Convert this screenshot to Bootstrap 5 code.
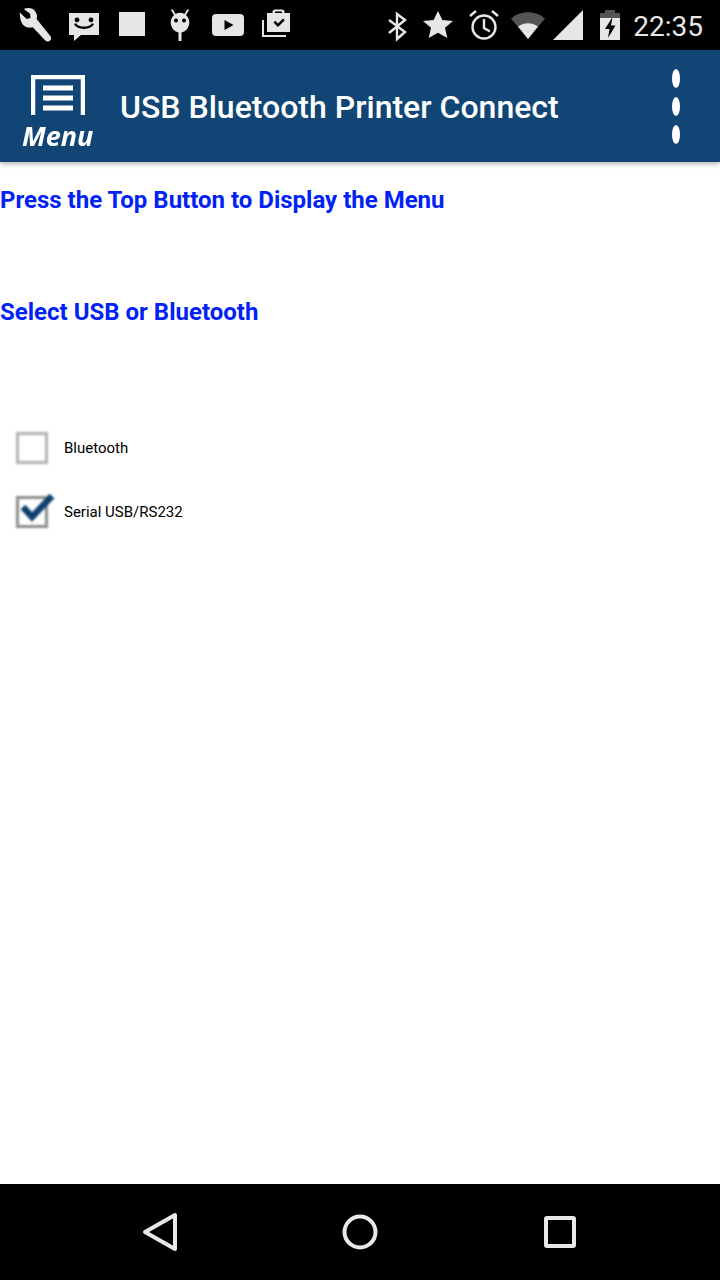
<!DOCTYPE html>
<html lang="en">
<head>
  <meta charset="UTF-8">
  <meta name="viewport" content="width=device-width, initial-scale=1.0">
  <title>USB Bluetooth Printer Connect</title>
  <link href="https://cdn.jsdelivr.net/npm/bootstrap@5.3.1/dist/css/bootstrap.min.css" rel="stylesheet">
  <style>
    html, body { height: 100%; }
    body {
      font-family: Roboto, "Liberation Sans", sans-serif;
      background: #fff;
      height: 1280px;
      overflow: hidden;
    }
    .status-bar { height: 50px; background: #000; color: #e6e6e6; padding-left: 18px; padding-right: 17px; }
    .status-left { gap: 12px; }
    .status-bar svg { width: 36px; height: 36px; fill: #e6e6e6; display: block; filter: blur(.3px); }
    .status-time { font-size: 28px; line-height: 50px; margin-left: 5px; margin-top: 3px; }
    .gap-5px { margin-left: 5px; }
    .gap-10px { margin-left: 10px; }
    .gap-8px { margin-left: 8px; }
    .gap-4px { margin-left: 4px; }
    .gap-6px { margin-left: 6px; }
    .app-bar {
      height: 112px;
      background: #114575;
      color: #fff;
      box-shadow: 0 2px 5px rgba(0, 0, 0, .3);
      position: relative;
    }
    .menu-btn { width: 120px; filter: blur(.7px); }
    .menu-btn svg { width: 54px; height: 40px; display: block; margin: 25px 0 0 9px; }
    .menu-word {
      font-family: "Open Sans", sans-serif;
      font-weight: 700;
      font-style: italic;
      font-size: 27px;
      line-height: 30px;
      margin-top: 6px;
      color: #fff;
    }
    .menu-inner { padding-left: 22px; }
    .app-title { font-size: 32px; font-weight: 500; margin: 1px 0 0; line-height: 112px; }
    .dots { padding-right: 40px; gap: 9px; }
    .dot { width: 8px; height: 19px; background: #fff; border-radius: 50%; }
    .page-body { height: 1022px; }
    .hint {
      font-size: 24px;
      font-weight: 700;
      color: #0022f5;
      line-height: 32px;
      margin: 0;
    }
    .hint-first { padding-top: 22px; }
    .hint-second { margin-top: 80px; }
    .options { margin-top: 88px; padding-left: 16px; }
    .opt-row { height: 64px; gap: 16px; font-size: 15px; color: #000; }
    .tick-box { width: 32px; height: 32px; display: block; flex: none; filter: blur(.8px); overflow: visible; }
    .nav-bar { height: 96px; background: #000; }
    .nav-bar svg { display: block; fill: none; stroke: #e8e8e8; stroke-width: 4; stroke-linejoin: round; }
    .nav-slot { width: 200px; }
  </style>
</head>
<body>
  <div class="status-bar d-flex justify-content-between align-items-center">
    <div class="status-left d-flex">
      <svg viewBox="0 0 36 36"><path transform="translate(-3.500 -1.500) scale(1.06)" d="M5 6.500l6.500 6.200 3.600-1-.4-4-6-4.400c3.500-1.600 7.600-1.300 10.200 1.300 2.200 2.200 2.800 5.300 2 8.200L33.600 28.500c1.400 1.400 1.300 3.400 0 4.600-1.300 1.300-3.200 1.300-4.600 0L17.200 20.500c-3 1-6.400.4-8.700-1.800C5.900 16 4.800 10.300 5 6.500z"/></svg>
      <svg viewBox="0 0 36 36"><path fill-rule="evenodd" d="M3 6h30v22H15l-7 6v-6H3zM11 10.500a2.400 2.400 0 1 0 .01 0zM25 10.500a2.400 2.400 0 1 0 .01 0zM8 17c3 6.500 17 6.500 20 0l-2-.8c-2.500 4.500-13.500 4.500-16 0z"/></svg>
      <svg viewBox="0 0 36 36"><rect x="5" y="5" width="26" height="24"/></svg>
      <svg viewBox="0 0 36 36"><path fill-rule="evenodd" d="M9 3l1.500-1 3 5a10 10 0 0 1 9 0l3-5L27 3l-3 5.300A10 10 0 0 1 19.500 25.400V34h-3V25.400A10 10 0 0 1 12 8.300zM14 11.500a2 2 0 1 0 .01 0zM22 11.500a2 2 0 1 0 .01 0z"/></svg>
      <svg viewBox="0 0 36 36"><path fill-rule="evenodd" d="M6 7h24a4 4 0 0 1 4 4v14a4 4 0 0 1-4 4H6a4 4 0 0 1-4-4V11a4 4 0 0 1 4-4zM14.500 13v10l9-5z"/></svg>
      <svg viewBox="0 0 36 36"><path fill-rule="evenodd" d="M14.500 6V4.500A2.500 2.500 0 0 1 17 2.500h7a2.500 2.500 0 0 1 2.500 2V6H32v19H9V6zM17 6h7V4.500h-7zM15.500 15.500l1.800-1.800 2.700 2.700 5-5 1.800 1.800-6.800 6.800zM4 13h2v15h22v2H4z"/></svg>
    </div>
    <div class="d-flex align-items-center">
      <svg viewBox="0 0 36 36" style="fill:none;stroke:#e6e6e6;stroke-width:2.400"><path d="M10 13l16 12-8 7V7l8 6-16 13"/></svg>
      <svg class="gap-5px" viewBox="0 0 36 36"><path d="M18 4l4.400 9 10.600 1-8 6.700 2.300 10.300L18 25.800 8.700 31l2.300-10.300-8-6.700 10.600-1z"/></svg>
      <svg class="gap-10px" viewBox="0 0 36 36" style="fill:none;stroke:#e6e6e6;stroke-width:2.400"><circle cx="18" cy="20" r="11.500"/><path d="M18 12v9l6 3.500M4 9l6-5M32 9l-6-5"/></svg>
      <svg class="gap-8px" viewBox="0 0 36 36"><path fill="#555" d="M1 11.500C10 3 26 3 35 11.500L18 32z"/><path d="M8 19.500c6-4.500 14-4.500 20 0L18 32z"/></svg>
      <svg class="gap-4px" viewBox="0 0 36 36"><path d="M33 3v30H3z"/></svg>
      <svg class="gap-6px" viewBox="0 0 36 36"><path fill="#555" d="M13 3v3H8v5h20V6h-5V3z"/><path fill-rule="evenodd" d="M8 11h20v22H8zM20.500 10L13 22h4.500L16 31l7.500-12.500H19z"/></svg>
      <span class="status-time">22:35</span>
    </div>
  </div>

  <header class="app-bar d-flex align-items-start justify-content-between">
    <div class="d-flex">
      <div class="menu-btn">
        <div class="menu-inner">
          <svg viewBox="0 0 54 40" fill="none" stroke="#fff">
            <path d="M2 40V2h50v38" stroke-width="4.500"/>
            <path d="M12 13h30M12 23h30M12 33h30" stroke-width="5"/>
          </svg>
          <div class="menu-word">Menu</div>
        </div>
      </div>
      <h1 class="app-title">USB Bluetooth Printer Connect</h1>
    </div>
    <div class="dots d-flex flex-column align-self-center">
      <div class="dot"></div>
      <div class="dot"></div>
      <div class="dot"></div>
    </div>
  </header>

  <main class="page-body">
    <p class="hint hint-first">Press the Top Button to Display the Menu</p>
    <p class="hint hint-second">Select USB or Bluetooth</p>
    <div class="options">
      <div class="opt-row d-flex align-items-center">
        <svg class="tick-box" viewBox="0 0 32 32"><rect x="1.500" y="1.500" width="29" height="29" fill="#fff" stroke="#b4b4b4" stroke-width="3"/></svg>
        <span>Bluetooth</span>
      </div>
      <div class="opt-row d-flex align-items-center">
        <svg class="tick-box" viewBox="0 0 32 32"><rect x="1.500" y="1.500" width="29" height="29" fill="#fff" stroke="#8c8c8c" stroke-width="3"/><path d="M7 11l9 10L36 0" fill="none" stroke="#0e3f6e" stroke-width="6.500"/></svg>
        <span>Serial USB/RS232</span>
      </div>
    </div>
  </main>

  <nav class="nav-bar d-flex justify-content-center align-items-center">
    <div class="nav-slot d-flex justify-content-center"><svg width="36" height="40" viewBox="0 0 36 40"><path d="M33 3v34L3 20z"/></svg></div>
    <div class="nav-slot d-flex justify-content-center"><svg width="36" height="36" viewBox="0 0 36 36"><circle cx="18" cy="18" r="15.500"/></svg></div>
    <div class="nav-slot d-flex justify-content-center"><svg width="32" height="32" viewBox="0 0 32 32"><rect x="2" y="2" width="28" height="28" rx="1"/></svg></div>
  </nav>
  <script src="https://cdn.jsdelivr.net/npm/bootstrap@5.3.1/dist/js/bootstrap.bundle.min.js"></script>
</body>
</html>
